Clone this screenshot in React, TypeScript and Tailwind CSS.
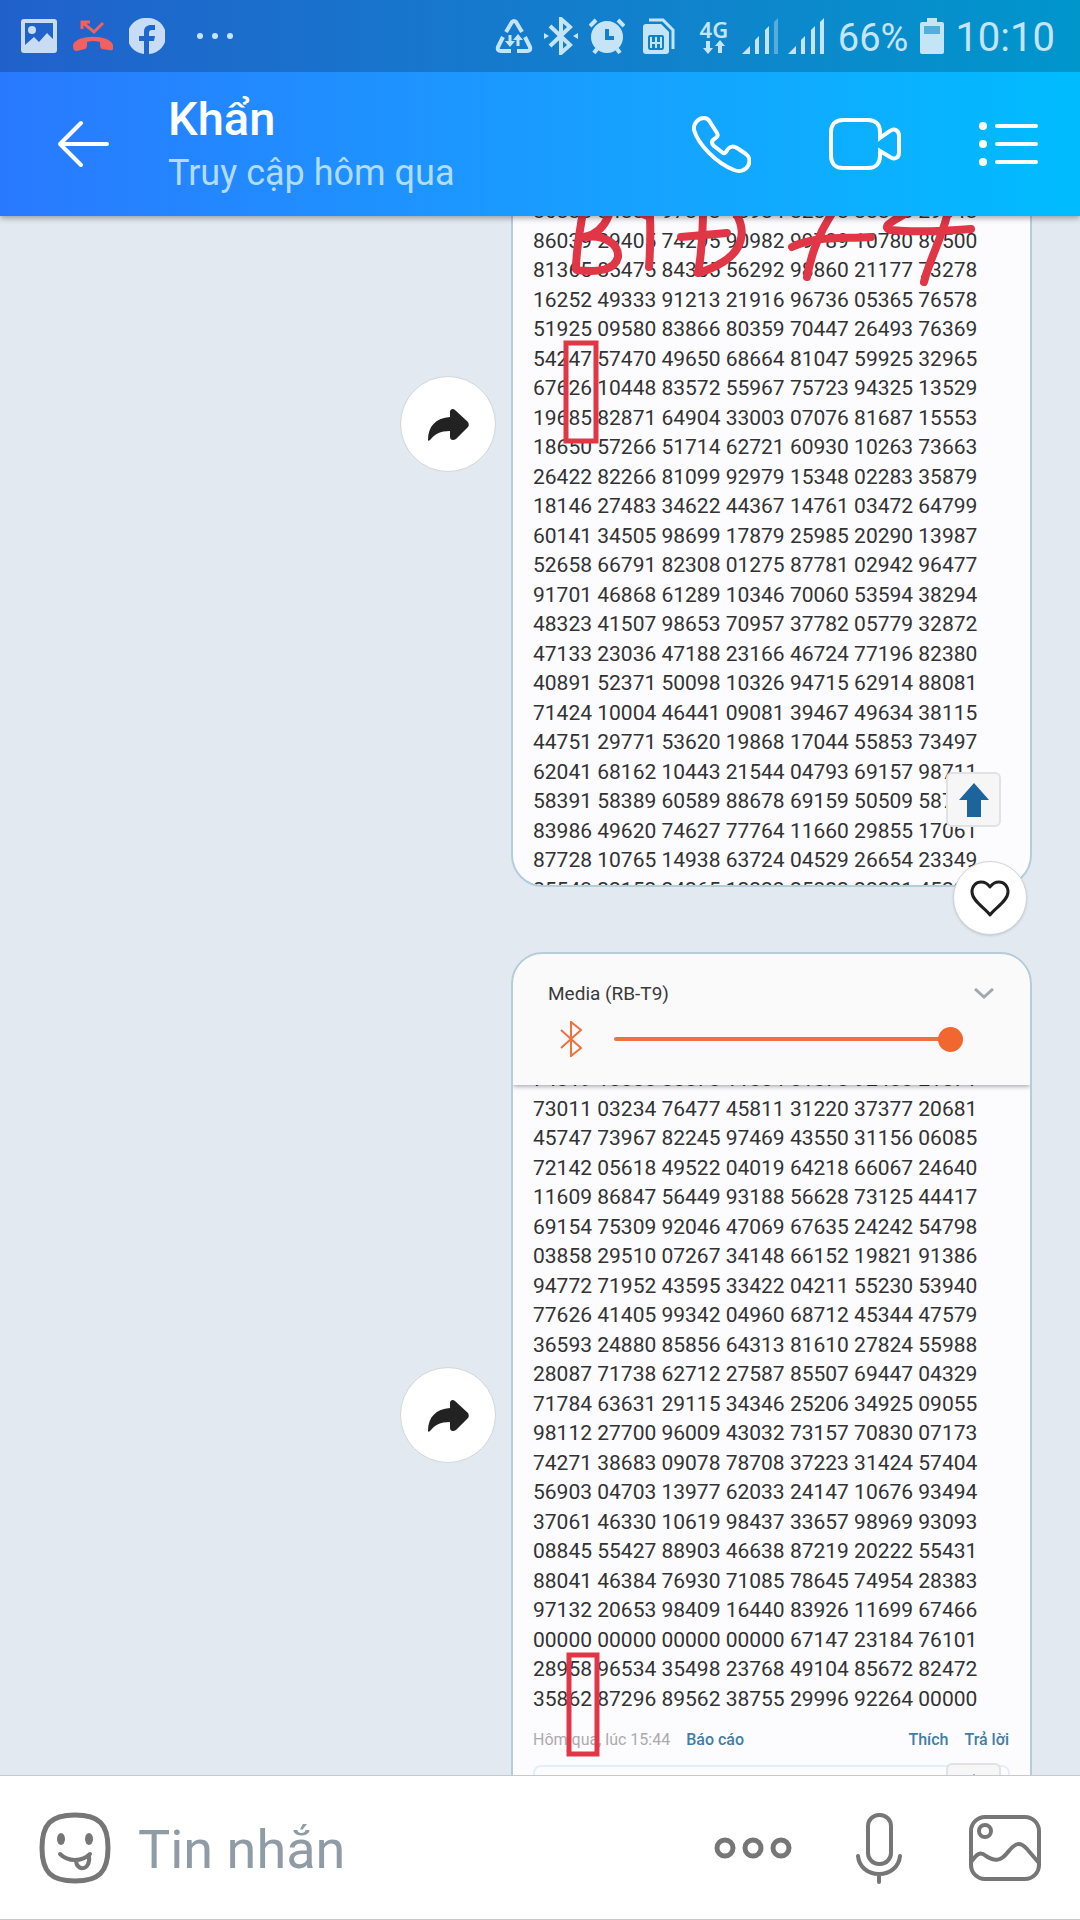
import React from "react";

const firstRows = [
  "86888 84881 97898 48984 82898 88898 29848",
  "86039 29405 74295 90982 99789 10780 89500",
  "81365 85475 84355 56292 98860 21177 73278",
  "16252 49333 91213 21916 96736 05365 76578",
  "51925 09580 83866 80359 70447 26493 76369",
  "54247 57470 49650 68664 81047 59925 32965",
  "67626 10448 83572 55967 75723 94325 13529",
  "19685 82871 64904 33003 07076 81687 15553",
  "18650 57266 51714 62721 60930 10263 73663",
  "26422 82266 81099 92979 15348 02283 35879",
  "18146 27483 34622 44367 14761 03472 64799",
  "60141 34505 98699 17879 25985 20290 13987",
  "52658 66791 82308 01275 87781 02942 96477",
  "91701 46868 61289 10346 70060 53594 38294",
  "48323 41507 98653 70957 37782 05779 32872",
  "47133 23036 47188 23166 46724 77196 82380",
  "40891 52371 50098 10326 94715 62914 88081",
  "71424 10004 46441 09081 39467 49634 38115",
  "44751 29771 53620 19868 17044 55853 73497",
  "62041 68162 10443 21544 04793 69157 98711",
  "58391 58389 60589 88678 69159 50509 58711",
  "83986 49620 74627 77764 11660 29855 17061",
  "87728 10765 14938 63724 04529 26654 23349",
  "25543 22152 24265 12222 25222 22221 45222",
];

const secondRows = [
  "74819 18888 88878 11884 81878 92488 21871",
  "73011 03234 76477 45811 31220 37377 20681",
  "45747 73967 82245 97469 43550 31156 06085",
  "72142 05618 49522 04019 64218 66067 24640",
  "11609 86847 56449 93188 56628 73125 44417",
  "69154 75309 92046 47069 67635 24242 54798",
  "03858 29510 07267 34148 66152 19821 91386",
  "94772 71952 43595 33422 04211 55230 53940",
  "77626 41405 99342 04960 68712 45344 47579",
  "36593 24880 85856 64313 81610 27824 55988",
  "28087 71738 62712 27587 85507 69447 04329",
  "71784 63631 29115 34346 25206 34925 09055",
  "98112 27700 96009 43032 73157 70830 07173",
  "74271 38683 09078 78708 37223 31424 57404",
  "56903 04703 13977 62033 24147 10676 93494",
  "37061 46330 10619 98437 33657 98969 93093",
  "08845 55427 88903 46638 87219 20222 55431",
  "88041 46384 76930 71085 78645 74954 28383",
  "97132 20653 98409 16440 83926 11699 67466",
  "00000 00000 00000 00000 67147 23184 76101",
  "28958 96534 35498 23768 49104 85672 82472",
  "35862 87296 89562 38755 29996 92264 00000",
];

function SignalIcon({ weak }: { weak?: boolean }) {
  return (
    <svg width="36" height="36" viewBox="0 0 36 36" fill="currentColor" aria-hidden="true">
      <path d="M0 36L8 28V36Z" />
      <path d="M13 22L17 18V36H13Z" />
      <path d="M23 12L27 8V36H23Z" />
      <path d="M32 4L36 0V36H32Z" opacity={weak ? 0.4 : 1} />
    </svg>
  );
}

function StatusBar() {
  return (
    <div className="flex h-[72px] shrink-0 items-center bg-black/20 pl-[21px] pr-[25px] text-[#c5e5f7]">
      <svg width="36" height="34" viewBox="0 0 36 34" className="text-[#c8dcf5]" aria-hidden="true">
        <path fillRule="evenodd" fill="currentColor" d="M3 0H33Q36 0 36 3V31Q36 34 33 34H3Q0 34 0 31V3Q0 0 3 0ZM4 4V26L13 18L18 23L26 14L32 20V4Z" />
        <circle cx="11" cy="11" r="4" fill="currentColor" />
      </svg>
      <svg width="40" height="32" viewBox="0 0 40 32" className="ml-4 text-[#f2605f]" aria-hidden="true">
        <path d="M9 9V2H17M9 2L21 12L30 3" fill="none" stroke="currentColor" strokeWidth="3" />
        <path fill="currentColor" d="M0 25C3 14 37 14 40 25C41 30 39 31 36 30L29 29Q27 28 27 25V22Q20 20 14 22V25Q14 28 12 29L4 31C1 31 0 29 0 25Z" />
      </svg>
      <svg width="36" height="36" viewBox="0 0 36 36" className="ml-4 text-[#c8dcf5]" aria-hidden="true">
        <path fill="currentColor" d="M18 0A18 18 0 0 0 15 36V23H10V18H15V14C15 9 18 7 22 7H26V12H23C21 12 20 13 20 15V18H26L25 23H20V36A18 18 0 0 0 18 0Z" />
      </svg>
      <svg width="36" height="8" viewBox="0 0 36 8" fill="currentColor" className="ml-8" aria-hidden="true">
        <circle cx="3" cy="4" r="3" />
        <circle cx="18" cy="4" r="3" />
        <circle cx="33" cy="4" r="3" />
      </svg>
      <div className="ml-auto flex items-center">
        <svg width="38" height="34" viewBox="0 0 38 34" fill="none" stroke="currentColor" strokeWidth="4" aria-hidden="true">
          <path d="M11 13L17 3Q19 1 21 3L27 13M8 18L3 28Q2 32 6 32H16M30 18L35 28Q36 32 32 32H22" />
          <path strokeWidth="3" d="M15 16V24M23 27V19" />
          <path stroke="none" fill="currentColor" d="M10 22H20L15 28ZM18 21H28L23 15Z" />
        </svg>
        <svg width="34" height="38" viewBox="0 0 34 38" fill="none" stroke="currentColor" strokeWidth="4" className="ml-[11px]" aria-hidden="true">
          <path d="M6 9L26 28L17 36V2L26 10L6 29" />
          <path stroke="none" fill="currentColor" d="M0 16L5 19L0 22ZM34 16L29 19L34 22Z" />
        </svg>
        <svg width="36" height="36" viewBox="0 0 36 36" className="ml-[11px]" aria-hidden="true">
          <path fillRule="evenodd" fill="currentColor" d="M18 3A16 16 0 1 0 18 35A16 16 0 1 0 18 3ZM16 11H20V18H25V22H16Z" />
          <path d="M1 8L7 2M35 8L29 2M8 31L5 35M28 31L31 35" fill="none" stroke="currentColor" strokeWidth="4" />
        </svg>
        <svg width="32" height="36" viewBox="0 0 32 36" className="ml-[18px]" aria-hidden="true">
          <path d="M6 2H20L30 12V31" fill="none" stroke="currentColor" strokeWidth="3" />
          <path fillRule="evenodd" fill="currentColor" d="M3 6H18L26 14V33Q26 36 23 36H3Q0 36 0 33V9Q0 6 3 6ZM5 19V29Q5 32 7 32H19Q21 32 21 29V19Q21 17 19 17H7Q5 17 5 19Z" />
          <path d="M8 19V30M13 19V30M18 19V30M8 25H18" fill="none" stroke="currentColor" strokeWidth="2" />
        </svg>
        <div className="ml-6 flex w-[30px] flex-col items-center">
          <span className="font-['Noto_Sans',sans-serif] text-[22px] font-semibold leading-[22px]">4G</span>
          <svg width="22" height="14" viewBox="0 0 22 14" fill="currentColor" aria-hidden="true">
            <path d="M3 1H7V8H10L5 14L0 8H3ZM15 13H19V6H22L17 0L12 6H15Z" />
          </svg>
        </div>
        <div className="ml-[13px] flex gap-[10px]">
          <SignalIcon weak />
          <SignalIcon />
        </div>
        <span className="ml-[14px] mt-1 text-[38px] leading-[48px]">66%</span>
        <svg width="24" height="36" viewBox="0 0 24 36" className="ml-3" aria-hidden="true">
          <path fill="currentColor" d="M7 0H17V4H22Q24 4 24 6V34Q24 36 22 36H2Q0 36 0 34V6Q0 4 2 4H7Z" />
          <path fill="#4fb0dc" d="M4 8H20V16H4Z" />
        </svg>
        <span className="ml-[11px] mt-1 text-[40px] leading-[48px]">10:10</span>
      </div>
    </div>
  );
}

function ChatHeader() {
  return (
    <div className="flex h-[144px] items-center pl-[57px] pr-[41px] text-white">
      <button type="button" aria-label="Back">
        <svg width="52" height="48" viewBox="0 0 52 48" fill="none" stroke="currentColor" strokeWidth="4" strokeLinecap="round" strokeLinejoin="round">
          <path d="M24 3L3 24L24 45M3 24H50" />
        </svg>
      </button>
      <div className="ml-[59px] pt-1">
        <h1 className="text-[47px] font-medium leading-[54px]">Khẩn</h1>
        <p className="text-[36px] leading-[54px] text-[#b2dcff]">Truy cập hôm qua</p>
      </div>
      <div className="ml-auto flex items-center gap-[78px]">
        <button type="button" aria-label="Call">
          <svg width="59" height="57" viewBox="0 0 59 57" fill="none" stroke="currentColor" strokeWidth="4" strokeLinejoin="round">
            <path d="M12 2C15 2 17 4 18 6L25 17C27 20 24 22 21 24C19 26 20 28 22 30L31 37C33 38 34 36 36 33C38 30 42 30 45 32L54 38C58 41 58 46 56 50C53 55 47 56 42 54C24 47 6 28 2 14C1 8 6 2 12 2Z" />
          </svg>
        </button>
        <button type="button" aria-label="Video call">
          <svg width="72" height="52" viewBox="0 0 72 52" fill="none" stroke="currentColor" strokeWidth="4">
            <path d="M51 20V14C51 6 46 2 39 2H14C6 2 2 7 2 14V38C2 46 7 50 14 50H39C47 50 51 45 51 38V33L61 39C65 42 70 40 70 35V18C70 12 65 10 61 13Z" />
          </svg>
        </button>
        <button type="button" aria-label="Options">
          <svg width="60" height="46" viewBox="0 0 60 46" fill="currentColor">
            <circle cx="4" cy="5" r="4" />
            <circle cx="4" cy="23" r="4" />
            <circle cx="4" cy="41" r="4" />
            <path d="M18 5H57M18 23H57M18 41H57" stroke="currentColor" strokeWidth="4" strokeLinecap="round" />
          </svg>
        </button>
      </div>
    </div>
  );
}

function ShareButton() {
  return (
    <button type="button" aria-label="Share" className="flex size-24 shrink-0 items-center justify-center rounded-full border border-[#d3d5d8] bg-white">
      <svg width="42" height="33" viewBox="0 0 42 33" fill="#222222">
        <path d="M1 32C1 18 9 10 23 9V4C23 1 26 0 28 2L41 14C42 16 42 18 41 19L29 31C26 33 23 32 23 29V23C13 23 8 26 3 32C2 33 1 33 1 32Z" />
      </svg>
    </button>
  );
}

function UpBox() {
  return (
    <div className="flex size-[55px] items-center justify-center rounded-md border-2 border-[#e2e2e3] bg-[#f6f6f7]">
      <svg width="30" height="34" viewBox="0 0 30 34" fill="#1b659c" aria-hidden="true">
        <path d="M15 0L30 17H22V34H8V17H0Z" />
      </svg>
    </div>
  );
}

function NumberRows({ rows, className }: { rows: string[]; className: string }) {
  return (
    <div className={"grid shrink-0 auto-rows-fr items-center pl-5 text-[21px] leading-[29px] text-[#323234] " + className}>
      {rows.map((row) => (
        <p key={row} className="whitespace-nowrap">{row}</p>
      ))}
    </div>
  );
}

const cardClass = "flex h-[926px] w-full flex-col overflow-hidden rounded-[32px] border-2 border-[#b5ccd9] bg-[#fcfcfe]";

function FirstMessage() {
  return (
    <article className="-mt-[255px] flex shrink-0 items-center justify-end gap-[15px] pr-12">
      <ShareButton />
      <div className="relative w-[521px]">
        <div className={cardClass + " justify-end"}>
          <NumberRows rows={firstRows} className="-mb-5 h-[708px]" />
        </div>
        <svg width="521" height="240" viewBox="511 210 521 240" className="absolute left-0 top-[249px]" fill="none" stroke="#e03646" strokeWidth="8" strokeLinecap="round" strokeLinejoin="round" aria-hidden="true">
          <path d="M583 212C580 230 576 250 576 269M610 212C606 224 598 234 585 237C604 234 619 244 618 257C615 270 598 273 577 270" />
          <path d="M638 212L650 217Q651 240 649 267" />
          <path d="M703 212Q703 245 698 273M681 237L727 233M735 212C748 232 741 251 723 262Q712 269 698 273" />
          <path d="M833 212C820 232 812 250 807 277M792 247C815 236 840 239 871 237" />
          <path d="M908 212C896 220 880 226 890 230Q920 233 971 229M948 212C942 238 930 258 924 282" />
          <rect x="566" y="343" width="30" height="98" strokeWidth="5" strokeLinejoin="miter" />
        </svg>
        <div className="absolute bottom-[60px] right-[31px]">
          <UpBox />
        </div>
        <button type="button" aria-label="Like" className="absolute -bottom-12 right-[5px] flex size-[74px] items-center justify-center rounded-full border border-[#d0d5da] bg-white shadow-sm">
          <svg width="40" height="37" viewBox="0 0 40 37" fill="none" stroke="#1f1f1f" strokeWidth="3" strokeLinejoin="round">
            <path d="M20 35C16 29 2 21 2 12C2 6 6 2 11 2C15 2 18 4 20 7C22 4 25 2 29 2C34 2 38 6 38 12C38 21 24 29 20 35Z" />
          </svg>
        </button>
      </div>
    </article>
  );
}

function MediaPanel() {
  return (
    <div className="relative shrink-0 bg-[#fafafa] pb-7 pl-[35px] pr-9 pt-[25px] shadow-[0_1px_5px_rgba(0,0,0,0.4)]">
      <div className="flex items-center justify-between">
        <label htmlFor="volume" className="text-[19px] leading-[30px] text-[#3a3a3a]">Media (RB-T9)</label>
        <svg width="20" height="12" viewBox="0 0 20 12" fill="none" stroke="#a3a9ad" strokeWidth="3" aria-hidden="true">
          <path d="M1 1L10 9L19 1" />
        </svg>
      </div>
      <div className="mt-3 flex items-center pl-3 pr-[31px]">
        <svg width="22" height="36" viewBox="0 0 22 36" fill="none" stroke="#f0713c" strokeWidth="2" aria-hidden="true">
          <path d="M1 9L21 27L11 35V1L21 9L1 27" />
        </svg>
        <input
          id="volume"
          type="range"
          defaultValue={100}
          className="ml-8 h-1 min-w-0 flex-1 appearance-none rounded-full bg-[#ef7040] [&::-webkit-slider-thumb]:size-[25px] [&::-webkit-slider-thumb]:appearance-none [&::-webkit-slider-thumb]:rounded-full [&::-webkit-slider-thumb]:bg-[#f2672f]"
        />
      </div>
    </div>
  );
}

function SecondMessage() {
  return (
    <article className="mt-[65px] flex shrink-0 items-center justify-end gap-[15px] pr-12">
      <ShareButton />
      <div className="relative w-[521px]">
        <div className={cardClass}>
          <MediaPanel />
          <NumberRows rows={secondRows} className="-mt-5 h-[649px]" />
          <div className="mt-[11px] flex items-center pl-5 pr-[21px] text-[16px] leading-[30px] text-[#3f7da8]">
            <span className="text-[#a9abae]">Hôm qua, lúc 15:44</span>
            <button type="button" className="ml-4 font-medium">Báo cáo</button>
            <button type="button" className="ml-auto font-medium">Thích</button>
            <button type="button" className="ml-4 font-medium">Trả lời</button>
          </div>
          <div className="ml-5 mr-5 mt-[10px] h-[60px] shrink-0 rounded-lg border-2 border-[#e3eff6]" />
        </div>
        <div className="absolute bottom-[60px] right-[31px]">
          <UpBox />
        </div>
        <svg width="34" height="105" viewBox="0 0 34 105" fill="none" stroke="#e03646" strokeWidth="5" className="absolute left-[55px] top-[700px]" aria-hidden="true">
          <rect x="3" y="3" width="28" height="99" />
        </svg>
      </div>
    </article>
  );
}

function Composer() {
  return (
    <footer className="flex h-[145px] shrink-0 items-center border-y border-[#c6c8ca] bg-white pl-[39px] pr-[39px] text-[#767676]">
      <button type="button" aria-label="Stickers">
        <svg width="72" height="72" viewBox="0 0 72 72" fill="none" stroke="currentColor" strokeWidth="5" strokeLinecap="round">
          <path d="M36 3C60 3 69 12 69 36C69 60 60 69 36 69C12 69 3 60 3 36C3 12 12 3 36 3Z" />
          <ellipse cx="22" cy="27" rx="4" ry="6" fill="currentColor" stroke="none" />
          <ellipse cx="50" cy="27" rx="4" ry="6" fill="currentColor" stroke="none" />
          <path strokeWidth="4" d="M21 42C29 50 43 50 51 42M37 48C37 60 52 59 50 44" />
        </svg>
      </button>
      <input
        type="text"
        aria-label="Tin nhắn"
        placeholder="Tin nhắn"
        className="ml-[27px] h-20 min-w-0 flex-1 bg-transparent pt-1 text-[54px] text-[#333333] outline-none placeholder:text-[#8f9ca6]"
      />
      <button type="button" aria-label="More">
        <svg width="78" height="22" viewBox="0 0 78 22" fill="none" stroke="currentColor" strokeWidth="5">
          <circle cx="11" cy="11" r="8" />
          <circle cx="39" cy="11" r="8" />
          <circle cx="67" cy="11" r="8" />
        </svg>
      </button>
      <button type="button" aria-label="Record" className="ml-16">
        <svg width="46" height="72" viewBox="0 0 46 72" fill="none" stroke="currentColor" strokeWidth="4" strokeLinecap="round">
          <rect x="12" y="3" width="23" height="49" rx="11" />
          <path d="M2 44C3 55 12 62 23 62C34 62 43 55 44 44M23 62V70" />
        </svg>
      </button>
      <button type="button" aria-label="Photos" className="ml-[67px]">
        <svg width="72" height="66" viewBox="0 0 72 66" fill="none" stroke="currentColor" strokeWidth="4">
          <rect x="2" y="2" width="68" height="62" rx="14" />
          <circle cx="16" cy="16" r="6" />
          <path d="M2 47C8 39 11 36 17 41C26 47 32 46 39 37C46 28 51 26 58 34L70 48" />
        </svg>
      </button>
    </footer>
  );
}

export default function App() {
  return (
    <div className="flex h-screen flex-col overflow-hidden bg-[#e2e9f0] font-['Roboto',sans-serif]">
      <header className="relative z-10 shrink-0 bg-linear-to-r from-[#2979ff] to-[#00bcff] shadow-[0_2px_6px_rgba(0,0,0,0.35)]">
        <StatusBar />
        <ChatHeader />
      </header>
      <main className="flex min-h-0 flex-1 flex-col overflow-hidden">
        <FirstMessage />
        <SecondMessage />
      </main>
      <Composer />
    </div>
  );
}
